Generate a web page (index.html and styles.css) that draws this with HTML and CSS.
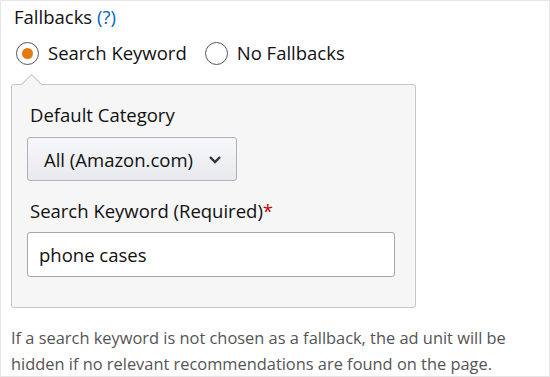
FILE: index.html
```html
<!DOCTYPE html>
<html lang="en">
<head>
    <meta charset="UTF-8">
    <meta name="viewport" content="width=device-width, initial-scale=1.0">
    <title>Fallbacks</title>
    <link rel="stylesheet" href="styles.css">
</head>
<body>
    <div class="frame">
        <div class="label">Fallbacks <a class="help" href="#">(?)</a></div>
        <div class="radios">
            <label class="radio"><span class="dot checked"></span>Search Keyword</label>
            <label class="radio"><span class="dot"></span>No Fallbacks</label>
        </div>
        <div class="panel">
            <div class="field-label">Default Category</div>
            <button class="select">All (Amazon.com)
                <svg width="14" height="9" viewBox="0 0 14 9"><path d="M2 2 L7 7 L12 2" fill="none" stroke="#333" stroke-width="2.4"/></svg>
            </button>
            <div class="field-label second">Search Keyword (Required)<span class="req">*</span></div>
            <input type="text" class="keyword" value="phone cases">
        </div>
        <p class="note">If a search keyword is not chosen as a fallback, the ad unit will be hidden if no relevant recommendations are found on the page.</p>
    </div>
</body>
</html>
```

FILE: styles.css
```css
html, body {
    margin: 0;
    padding: 0;
}
body {
    font-family: "Open Sans", "Noto Sans", sans-serif;
    color: #111;
    background: white;
}
.frame {
    width: 548px;
    height: 375px;
    border: 1px solid #e6e6e6;
    overflow: hidden;
}
.label {
    font-size: 18.5px;
    margin: 3px 0 0 13px;
    line-height: 26px;
}
.help {
    color: #0066c0;
    text-decoration: none;
}
.radios {
    display: flex;
    gap: 18px;
    margin: 9px 0 0 15px;
}
.radio {
    display: flex;
    align-items: center;
    gap: 9px;
    font-size: 18.5px;
    line-height: 28px;
}
.dot {
    width: 23px;
    height: 23px;
    box-sizing: border-box;
    border: 1px solid #555;
    border-radius: 50%;
    display: flex;
    align-items: center;
    justify-content: center;
}
.dot.checked::after {
    content: "";
    width: 11px;
    height: 11px;
    border-radius: 50%;
    background: #e47911;
}
.panel {
    position: relative;
    margin: 17px 0 0 10px;
    width: 405px;
    height: 224px;
    box-sizing: border-box;
    background: #f6f6f6;
    border: 1px solid #c4c4c4;
    border-radius: 3px;
    padding: 18px 0 0 15px;
}
.panel::before {
    content: "";
    position: absolute;
    top: -8px;
    left: 12px;
    width: 14px;
    height: 14px;
    background: #f6f6f6;
    border-left: 1px solid #c4c4c4;
    border-top: 1px solid #c4c4c4;
    transform: rotate(45deg);
}
.field-label {
    font-size: 18.5px;
    line-height: 24px;
    margin-left: 3px;
}
.field-label.second {
    margin-top: 18px;
}
.req {
    color: #c40000;
}
.select {
    display: flex;
    align-items: center;
    gap: 15px;
    margin-top: 10px;
    width: 210px;
    height: 44px;
    padding: 0 0 0 16px;
    font-family: inherit;
    font-size: 18.5px;
    color: #111;
    background: linear-gradient(#f7f8fa, #e7e9ec);
    border: 1px solid #adb1b8;
    border-radius: 3px;
}
.keyword {
    display: block;
    margin-top: 9px;
    width: 368px;
    height: 45px;
    box-sizing: border-box;
    padding: 0 11px;
    font-family: inherit;
    font-size: 18.5px;
    color: #111;
    background: white;
    border: 1px solid #a6a6a6;
    border-radius: 3px;
}
.note {
    margin: 17px 0 0 10px;
    font-size: 16.4px;
    line-height: 26px;
    color: #555;
}
```
